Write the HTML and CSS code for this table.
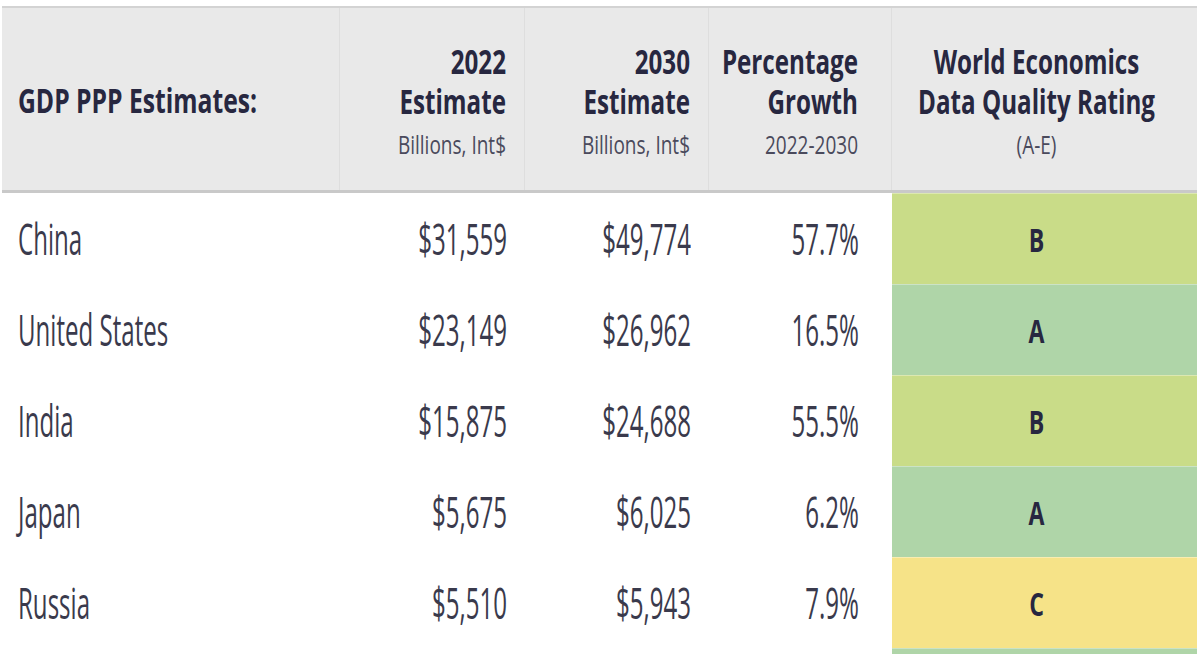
FILE: index.html
```html
<!DOCTYPE html>
<html lang="en">
<head>
<meta charset="utf-8">
<title>GDP PPP Estimates</title>
<link rel="stylesheet" href="styles.css">
</head>
<body>
<div class="table">
  <div class="row head">
    <div class="hc name first"><span class="hb wide">GDP PPP Estimates:</span></div>
    <div class="hc num"><span class="hb">2022</span><span class="hb">Estimate</span><span class="hs">Billions, Int$</span></div>
    <div class="hc num"><span class="hb">2030</span><span class="hb">Estimate</span><span class="hs">Billions, Int$</span></div>
    <div class="hc num pct"><span class="hb">Percentage</span><span class="hb">Growth</span><span class="hs">2022-2030</span></div>
    <div class="hc rate"><span class="hb">World Economics</span><span class="hb">Data Quality Rating</span><span class="hs">(A-E)</span></div>
  </div>
  <div class="row">
    <div class="c name"><span class="t">China</span></div>
    <div class="c num"><span class="t">$31,559</span></div>
    <div class="c num"><span class="t">$49,774</span></div>
    <div class="c num pct"><span class="t">57.7%</span></div>
    <div class="c rate grade-b"><span class="r">B</span></div>
  </div>
  <div class="row">
    <div class="c name"><span class="t">United States</span></div>
    <div class="c num"><span class="t">$23,149</span></div>
    <div class="c num"><span class="t">$26,962</span></div>
    <div class="c num pct"><span class="t">16.5%</span></div>
    <div class="c rate grade-a"><span class="r">A</span></div>
  </div>
  <div class="row">
    <div class="c name"><span class="t">India</span></div>
    <div class="c num"><span class="t">$15,875</span></div>
    <div class="c num"><span class="t">$24,688</span></div>
    <div class="c num pct"><span class="t">55.5%</span></div>
    <div class="c rate grade-b"><span class="r">B</span></div>
  </div>
  <div class="row">
    <div class="c name"><span class="t">Japan</span></div>
    <div class="c num"><span class="t">$5,675</span></div>
    <div class="c num"><span class="t">$6,025</span></div>
    <div class="c num pct"><span class="t">6.2%</span></div>
    <div class="c rate grade-a"><span class="r">A</span></div>
  </div>
  <div class="row">
    <div class="c name"><span class="t">Russia</span></div>
    <div class="c num"><span class="t">$5,510</span></div>
    <div class="c num"><span class="t">$5,943</span></div>
    <div class="c num pct"><span class="t">7.9%</span></div>
    <div class="c rate grade-c"><span class="r">C</span></div>
  </div>
  <div class="row partial">
    <div class="c name"></div>
    <div class="c num"></div>
    <div class="c num"></div>
    <div class="c num pct"></div>
    <div class="c rate grade-a"></div>
  </div>
</div>
</body>
</html>
```

FILE: styles.css
```css
* { box-sizing: border-box; }
html, body { margin: 0; padding: 0; background: #ffffff; }
body {
  font-family: "Open Sans", "Liberation Sans", sans-serif;
  color: #3a3a4c;
  overflow: hidden;
  height: 655px;
}
.table {
  width: 1195px;
  margin: 6px 0 0 2px;
}
.row {
  display: grid;
  grid-template-columns: 338px 185px 184px 183px 305px;
  height: 91px;
}
.row.partial { height: 6px; }
.head {
  height: 187px;
  background: #e9e9e9;
  border-top: 2px solid #d3d3d3;
  border-bottom: 3px solid #c9c9c9;
}
.hc {
  padding-top: 33px;
  border-right: 1px solid #dedede;
  min-width: 0;
}
.hc.rate { border-right: none; }
.hc.first { padding-top: 72px; }
.name { padding-left: 16px; }
.num { padding-right: 18px; }
.num.pct { padding-right: 33px; }
.rate { padding-right: 16px; }

.hb, .hs, .t, .r {
  display: flex;
  white-space: nowrap;
}
.name .hb, .name .t { justify-content: flex-start; transform-origin: left center; }
.num .hb, .num .hs, .num .t { justify-content: flex-end; transform-origin: right center; }
.rate .hb, .rate .hs, .rate .r { justify-content: center; transform-origin: center center; }

.hb {
  font-weight: 700;
  font-size: 33.6px;
  line-height: 40px;
  color: #272740;
  transform: scaleX(0.72);
}
.hb.wide { transform: scaleX(0.735); }
.hs {
  font-weight: 400;
  font-size: 25px;
  line-height: 46px;
  color: #4a4a5c;
  transform: scaleX(0.76);
}
.t {
  font-size: 43px;
  line-height: 91px;
  font-weight: 400;
  color: #3a3a4c;
  transform: scaleX(0.56);
}
.r {
  padding-top: 5px;
  font-size: 33px;
  line-height: 82px;
  font-weight: 700;
  color: #272740;
  transform: scaleX(0.7);
}

.c.rate { border-top: 1px solid rgba(255, 255, 255, 0.35); }
.grade-a { background: #afd5a8; }
.grade-b { background: #c9dc88; }
.grade-c { background: #f6e388; }
```
